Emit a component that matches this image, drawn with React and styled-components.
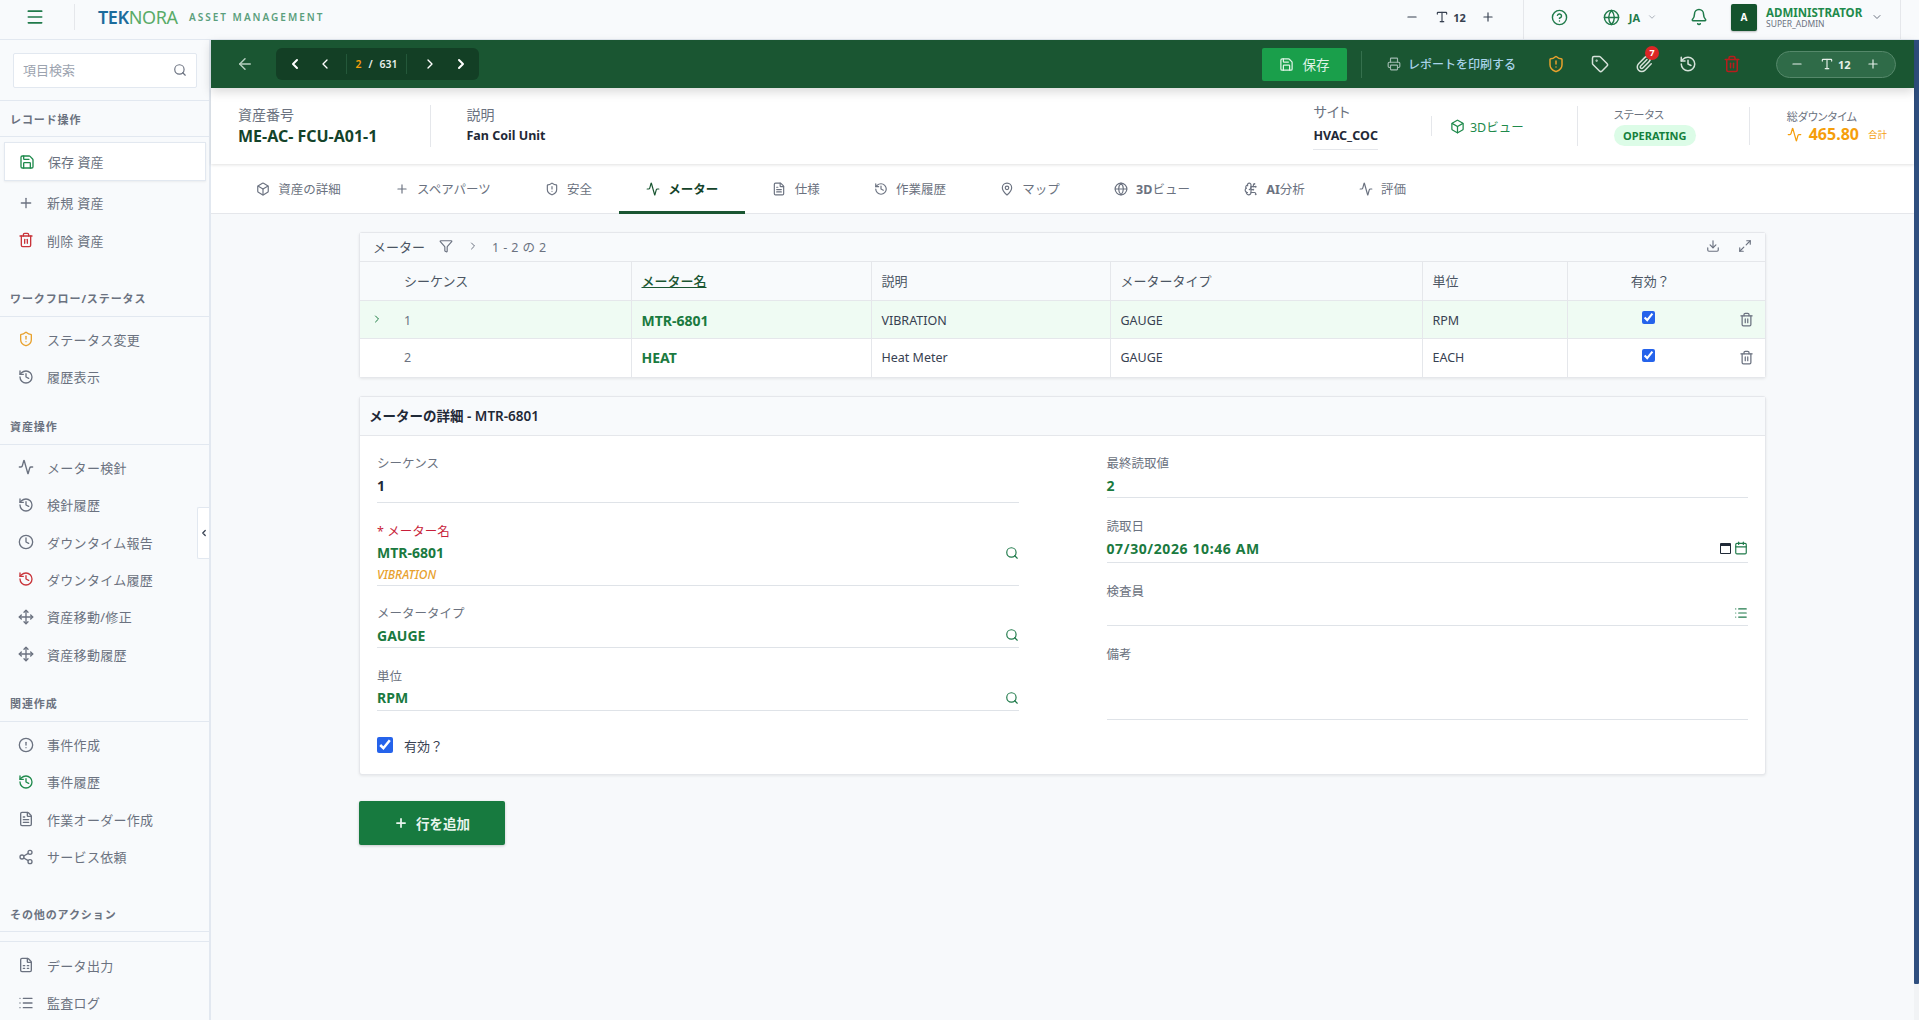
import React from 'react'
import styled, { createGlobalStyle } from 'styled-components'
import {
  Activity, ArrowLeft, Bell, Box, BrainCircuit, Calendar, ChevronDown, ChevronLeft, ChevronRight,
  CircleAlert, CircleHelp, Clock, Download, FileSpreadsheet, FileText, Filter, Globe,
  History, List, MapPin, Maximize2, Menu, Minus, Move, Paperclip, Plus, Printer, Save, Search,
  Share2, ShieldAlert, Tag, Trash2, Type,
} from 'lucide-react'

const GlobalStyle = createGlobalStyle`
  html, body { margin: 0; height: 100%; overflow: hidden; }
  body {
    font-family: "Noto Sans", "Noto Sans CJK JP", sans-serif;
    font-size: 13px;
    color: #374151;
    background: #f8fafc;
  }
  * { box-sizing: border-box; }
`

const Page = styled.div`
  width: 1919px;
  height: 1020px;
  display: flex;
  flex-direction: column;
  overflow: hidden;
`

/* top bar */
const TopBar = styled.header`
  height: 40px;
  flex: none;
  display: flex;
  align-items: center;
  background: #f8fafc;
  border-bottom: 1px solid #e2e8f0;
  padding: 0 18px 5px 0;
`
const MenuSlot = styled.div`
  width: 75px;
  height: 26px;
  display: flex;
  align-items: center;
  justify-content: center;
  padding-right: 5px;
  border-right: 1px solid #e5e7eb;
  color: #1f7a4a;
`
const Logo = styled.div`
  margin-left: 23px;
  width: 82px;
  font-size: 18px;
  line-height: 20px;
  letter-spacing: -0.4px;
  font-weight: 400;
  color: #59ab68;
  white-space: nowrap;
  span { color: #1c6c9c; font-weight: 600; }
`
const LogoTag = styled.div`
  margin-left: 9px;
  font-size: 10px;
  font-weight: 600;
  letter-spacing: 2px;
  color: #5b9f7c;
  white-space: nowrap;
`
const Spacer = styled.div`
  flex: 1;
`
const FontControl = styled.div`
  display: flex;
  align-items: center;
  color: ${p => p.$light ? '#e6efe9' : '#374151'};
  ${p => p.$light && `
    width: 120px;
    height: 27px;
    padding-left: 13px;
    background: #2f6b48;
    border: 1px solid #55886a;
    border-radius: 14px;
  `}
  b { font-size: 11px; font-weight: 700; margin: 0 15px 0 4px; }
  svg:first-child { margin-right: 16px; }
`
const TopDivider = styled.div`
  width: 1px;
  height: 39px;
  align-self: flex-start;
  background: #e5e7eb;
  margin-left: ${p => p.$ml}px;
`
const HelpButton = styled.div`
  margin-left: 27px;
  display: flex;
  color: #1f7a4a;
`
const LangButton = styled.div`
  margin-left: 35px;
  display: flex;
  align-items: center;
  color: #1f7a4a;
  b { font-size: 11px; font-weight: 700; margin: 0 7px 0 9px; }
  svg:last-child { color: #9ca3af; }
`
const BellButton = styled.div`
  margin-left: 33px;
  display: flex;
  color: #1f7a4a;
`
const UserChip = styled.div`
  margin-left: 23px;
  display: flex;
  align-items: center;
  > svg { margin-left: 11px; color: #6b7280; }
`
const Avatar = styled.div`
  width: 26px;
  height: 27px;
  border-radius: 2px;
  background: #14532d;
  color: #fff;
  font-size: 10px;
  font-weight: 700;
  display: flex;
  align-items: center;
  justify-content: center;
  box-shadow: 0 1px 2px rgba(0, 0, 0, .25);
`
const UserText = styled.div`
  margin-left: 9px;
  width: 94px;
  display: flex;
  flex-direction: column;
  white-space: nowrap;
  b { font-size: 11.5px; line-height: 12px; font-weight: 700; color: #1f8a4c; }
  span { font-size: 8.5px; line-height: 9px; color: #6b7280; }
`

/* body */
const Body = styled.div`
  flex: 1;
  display: flex;
  min-height: 0;
`

/* sidebar */
const Sidebar = styled.aside`
  position: relative;
  width: 211px;
  flex: none;
  background: #f8fafc;
  border-right: 2px solid #e2e8f0;
`
const SearchBlock = styled.div`
  height: 61px;
  padding: 13px 12px 0 13px;
  border-bottom: 1px solid #e2e8f0;
`
const SearchBox = styled.div`
  height: 35px;
  display: flex;
  align-items: center;
  justify-content: space-between;
  padding: 0 9px 2px 9px;
  background: #fff;
  border: 1px solid #e2e8f0;
  border-radius: 2px;
  color: #9ca3af;
  font-size: 13px;
  svg { color: #6b7280; }
`
const SectionLabel = styled.div`
  height: 36px;
  margin-top: ${p => p.$mt || 0}px;
  padding: 0 10px;
  display: flex;
  align-items: center;
  border-bottom: 1px solid #e2e8f0;
  font-size: 11px;
  font-weight: 700;
  letter-spacing: 0.9px;
  color: #6b7280;
  white-space: nowrap;
`
const EmptyGroup = styled.div`
  height: 10px;
  border-bottom: 1px solid #e2e8f0;
`
const Items = styled.div`
  padding-top: 4px;
`
const Item = styled.div`
  height: ${p => p.$active ? 39 : 37.4}px;
  display: flex;
  align-items: center;
  gap: 13px;
  margin: ${p => p.$active ? '1px 3px 3px 4px' : '0'};
  padding-left: ${p => p.$active ? 14 : 18}px;
  color: #6b7280;
  font-size: 13px;
  letter-spacing: 0.3px;
  white-space: nowrap;
  ${p => p.$active && `
    background: #fff;
    border: 1px solid #e2e8f0;
    box-shadow: 0 1px 2px rgba(0, 0, 0, .06);
    letter-spacing: 0;
  `}
  svg { color: ${p => p.$icon || '#6b7280'}; flex: none; }
`
const CollapseHandle = styled.div`
  position: absolute;
  top: 467px;
  right: 0;
  width: 12px;
  height: 52px;
  background: #fff;
  border: 1px solid #e2e8f0;
  border-right: 0;
  border-radius: 2px 0 0 2px;
  display: flex;
  align-items: center;
  justify-content: center;
  color: #374151;
`

/* main */
const Main = styled.main`
  flex: 1;
  min-width: 0;
  display: flex;
  flex-direction: column;
  background: #f7f9fb;
`
const ActionBar = styled.div`
  position: relative;
  z-index: 2;
  height: 48px;
  flex: none;
  display: flex;
  align-items: center;
  padding: 0 18px 0 25px;
  background: #1a5632;
  box-shadow: 0 4px 10px rgba(0, 0, 0, .15);
`
const BackButton = styled.div`
  display: flex;
  color: #b7cfc0;
`
const NavGroup = styled.div`
  margin-left: 22px;
  width: 203px;
  height: 32px;
  display: flex;
  align-items: center;
  background: #133f25;
  border-radius: 6px;
  color: #fff;
`
const NavStep = styled.div`
  width: ${p => p.$w}px;
  display: flex;
  justify-content: center;
`
const NavCount = styled.div`
  height: 20px;
  width: 61px;
  margin-left: 9px;
  display: flex;
  align-items: center;
  justify-content: center;
  gap: 7px;
  border-left: 1px solid #24583a;
  border-right: 1px solid #24583a;
  font-size: 10.5px;
  font-weight: 600;
  color: #e8f0eb;
  em { font-style: normal; color: #f59e0b; }
`
const SaveButton = styled.div`
  width: 85px;
  height: 33px;
  display: flex;
  align-items: center;
  justify-content: center;
  gap: 8px;
  background: #1a9f4b;
  border-radius: 2px;
  color: #dff3e6;
  font-size: 13.5px;
`
const BarDivider = styled.div`
  width: 1px;
  height: 27px;
  margin: 0 25px 0 14px;
  background: #35704d;
`
const PrintLink = styled.div`
  display: flex;
  align-items: center;
  gap: 7px;
  margin-right: 31px;
  color: #a8d3ea;
  font-size: 12px;
  font-weight: 500;
  white-space: nowrap;
  svg { color: #9fb9b0; }
`
const BarIcons = styled.div`
  display: flex;
  align-items: center;
  gap: 26px;
  margin-right: 35px;
`
const BarIcon = styled.div`
  position: relative;
  display: flex;
  color: ${p => p.$color};
`
const Badge = styled.span`
  position: absolute;
  top: -9px;
  right: -6px;
  width: 14px;
  height: 14px;
  border-radius: 50%;
  background: #dc2626;
  color: #fff;
  font-size: 9px;
  font-weight: 700;
  line-height: 14px;
  text-align: center;
`
const ScrollArea = styled.div`
  flex: 1;
  min-height: 0;
  display: flex;
  flex-direction: column;
`

/* asset header */
const InfoBar = styled.div`
  height: 76px;
  flex: none;
  display: flex;
  align-items: center;
  padding: 0 27px;
  background: #fff;
  box-shadow: 0 1px 3px rgba(0, 0, 0, .12);
  position: relative;
  z-index: 1;
`
const InfoBlock = styled.div`
  display: flex;
  flex-direction: column;
`
const InfoLabel = styled.div`
  font-size: ${p => p.$small ? 11 : 14}px;
  line-height: 18px;
  color: #6b7280;
  white-space: nowrap;
  font-feature-settings: "palt";
`
const InfoValue = styled.div`
  margin-top: 2px;
  font-size: ${p => p.$big ? 16 : 12.5}px;
  line-height: 20px;
  font-weight: 700;
  color: ${p => p.$big ? '#14432a' : '#1f2937'};
  white-space: nowrap;
`
const SiteValue = styled(InfoValue)`
  padding-bottom: 3px;
  border-bottom: 1px solid #e5e7eb;
  margin-top: 5px;
`
const InfoDivider = styled.div`
  width: 1px;
  height: ${p => p.$h}px;
  margin: 0 ${p => p.$r}px 0 ${p => p.$l}px;
  background: #e5e7eb;
`
const ViewLink = styled.div`
  display: flex;
  align-items: center;
  gap: 5px;
  color: #1f8a4c;
  font-size: 12.5px;
  white-space: nowrap;
`
const StatusPill = styled.div`
  margin-top: 1px;
  height: 21px;
  width: 82px;
  border-radius: 11px;
  background: #dcfce7;
  color: #15803d;
  font-size: 11px;
  font-weight: 700;
  display: flex;
  align-items: center;
  justify-content: center;
`
const DownRow = styled.div`
  display: flex;
  align-items: center;
  gap: 7px;
  margin-top: -2px;
  color: #f59e0b;
  b { font-size: 16px; line-height: 20px; font-weight: 700; }
  small { font-size: 9.5px; margin-left: 2px; }
`

/* tabs */
const TabBar = styled.nav`
  height: 50px;
  flex: none;
  display: flex;
  padding-left: 18px;
  background: #fff;
  border-bottom: 1px solid #e5e7eb;
`
const Tab = styled.div`
  height: 50px;
  display: flex;
  align-items: center;
  gap: 8.3px;
  padding: 2px 27px 0;
  font-size: 12.5px;
  font-weight: ${p => p.$active ? 600 : 400};
  color: ${p => p.$active ? '#14432a' : '#6b7280'};
  border-bottom: 3px solid ${p => p.$active ? '#1a5632' : 'transparent'};
  white-space: nowrap;
  svg { color: ${p => p.$active ? '#1a5632' : '#6b7280'}; }
  b { font-weight: 700; }
`

/* content */
const Content = styled.div`
  flex: 1;
  padding: 18px 148px 0;
`
const Card = styled.section`
  background: #fff;
  border: 1px solid #e5e7eb;
  border-radius: 3px;
  box-shadow: 0 1px 3px rgba(0, 0, 0, .08);
`
const TableTitle = styled.div`
  height: 29px;
  display: flex;
  align-items: center;
  padding: 0 13px 2px;
  background: #f8fafc;
  border-bottom: 1px solid #e5e7eb;
  font-size: 13px;
  color: #4b5563;
  svg { color: #6b7280; }
`
const TitleIcon = styled.span`
  display: flex;
  margin-left: ${p => p.$ml}px;
`
const TitleCount = styled.span`
  color: #6b7280;
  font-size: 12.5px;
  letter-spacing: 0.4px;
  margin-left: 13px;
`
const TitleIcons = styled.div`
  margin-left: auto;
  display: flex;
  gap: 18px;
`
const Grid = styled.table`
  width: 100%;
  border-collapse: collapse;
  table-layout: fixed;
`
const Th = styled.th`
  height: 38px;
  padding: ${p => p.$center ? '0 32px 0 0' : '0 10px'};
  text-align: ${p => p.$center ? 'center' : 'left'};
  font-size: 13px;
  font-weight: 400;
  color: #4b5563;
  background: #f8fafc;
  border-bottom: 1px solid #e5e7eb;
  & + & { border-left: 1px solid #e5e7eb; }
  &:first-child { padding-left: 44px; }
`
const SortHead = styled.span`
  color: #1a5632;
  font-weight: 500;
  text-decoration: underline;
`
const Tr = styled.tr`
  background: ${p => p.$active ? '#effbf3' : '#fff'};
`
const Td = styled.td`
  position: relative;
  height: 38px;
  padding: 2px 10px 0;
  font-size: 12.5px;
  color: #374151;
  border-bottom: 1px solid #e5e7eb;
  & + & { border-left: 1px solid #e5e7eb; }
  &:first-child { padding-left: 44px; color: #6b7280; }
  tr:last-child & { border-bottom: 0; height: 39px; padding-top: 0; }
`
const NameLink = styled.span`
  font-size: 14px;
  font-weight: 700;
  color: #1a7a40;
`
const RowToggle = styled.span`
  position: absolute;
  left: 11px;
  top: 12px;
  display: flex;
  color: #1a7a40;
`
const CheckCell = styled.div`
  display: flex;
  align-items: center;
  height: 100%;
  padding: 0 0 5px 64px;
`
const RowCheck = styled.input`
  width: 13px;
  height: 13px;
  margin: 0;
  accent-color: #2563eb;
`
const RowDelete = styled.span`
  position: absolute;
  right: 11px;
  top: 11px;
  display: flex;
  color: #6b7280;
`
const DetailCard = styled(Card)`
  margin-top: 18px;
  height: 379px;
`
const DetailHead = styled.div`
  height: 39px;
  display: flex;
  align-items: center;
  padding: 0 10px 2px 9px;
  background: #f8fafc;
  border-bottom: 1px solid #e5e7eb;
  font-size: 13.5px;
  font-weight: 600;
  color: #1f2937;
`
const DetailBody = styled.div`
  display: grid;
  grid-template-columns: 1fr 1fr;
  column-gap: 88px;
  padding: 20px 17px 0;
`
const Column = styled.div`
  display: flex;
  flex-direction: column;
  gap: ${p => p.$gap}px;
`
const Field = styled.div`
  height: ${p => p.$h}px;
  border-bottom: 1px solid #dfe3e8;
`
const Label = styled.div`
  font-size: 12.5px;
  line-height: 16px;
  color: ${p => p.$required ? '#c81e3a' : '#6b7280'};
`
const ValueRow = styled.div`
  height: 20px;
  margin-top: 3px;
  display: flex;
  align-items: center;
  justify-content: space-between;
  font-size: 14px;
  font-weight: 700;
  letter-spacing: ${p => p.$wide ? 0.6 : 0}px;
  color: ${p => p.$plain ? '#1f2937' : '#1a7a40'};
  svg { color: #1f7a4a; }
`
const DateIcons = styled.div`
  display: flex;
  align-items: center;
  gap: 3px;
`
const NativeCal = styled.span`
  width: 11px;
  height: 11px;
  border: 1.5px solid #1f2937;
  border-top-width: 3px;
  border-radius: 1px;
`
const SubValue = styled.div`
  font-size: 12px;
  line-height: 14px;
  margin-top: 5px;
  font-style: italic;
  font-weight: 500;
  color: #e8a12d;
`
const ActiveRow = styled.label`
  display: flex;
  align-items: center;
  gap: 11px;
  margin-top: 5px;
  height: 18px;
  font-size: 13px;
  color: #374151;
`
const BigCheck = styled.input`
  width: 16px;
  height: 16px;
  margin: 0;
  accent-color: #2563eb;
`
const AddButton = styled.div`
  margin-top: 26px;
  width: 146px;
  height: 44px;
  display: flex;
  align-items: center;
  justify-content: center;
  gap: 8px;
  padding-bottom: 1px;
  background: #177a3f;
  border-radius: 2px;
  color: #e9f5ee;
  font-size: 13.5px;
  font-weight: 600;
  box-shadow: 0 1px 3px rgba(0, 0, 0, .2);
`
const ScrollTrack = styled.div`
  width: 5px;
  flex: none;
  background: #f1f3f5;
`
const ScrollThumb = styled.div`
  height: 944px;
  background: #2f4f7f;
  border-radius: 0 0 1px 1px;
`

const sidebar = [
  { label: 'レコード操作', items: [
    { text: '保存 資産', Icon: Save, color: '#1f8a4c', active: true },
    { text: '新規 資産', Icon: Plus },
    { text: '削除 資産', Icon: Trash2, color: '#c9343a' },
  ] },
  { label: 'ワークフロー/ステータス', mt: 22, items: [
    { text: 'ステータス変更', Icon: ShieldAlert, color: '#e8a12d' },
    { text: '履歴表示', Icon: History },
  ] },
  { label: '資産操作', mt: 13, items: [
    { text: 'メーター検針', Icon: Activity },
    { text: '検針履歴', Icon: History },
    { text: 'ダウンタイム報告', Icon: Clock },
    { text: 'ダウンタイム履歴', Icon: History, color: '#c9343a' },
    { text: '資産移動/修正', Icon: Move },
    { text: '資産移動履歴', Icon: Move },
  ] },
  { label: '関連作成', mt: 13, items: [
    { text: '事件作成', Icon: CircleAlert },
    { text: '事件履歴', Icon: History, color: '#1f8a4c' },
    { text: '作業オーダー作成', Icon: FileText },
    { text: 'サービス依頼', Icon: Share2 },
  ] },
  { label: 'その他のアクション', mt: 21, extra: true, items: [
    { text: 'データ出力', Icon: FileSpreadsheet },
    { text: '監査ログ', Icon: List },
  ] },
]

const tabs = [
  { text: '資産の詳細', Icon: Box },
  { text: 'スペアパーツ', Icon: Plus },
  { text: '安全', Icon: ShieldAlert },
  { text: 'メーター', Icon: Activity, active: true },
  { text: '仕様', Icon: FileText },
  { text: '作業履歴', Icon: History },
  { text: 'マップ', Icon: MapPin },
  { text: 'ビュー', strong: '3D', Icon: Globe },
  { text: '分析', strong: 'AI', Icon: BrainCircuit },
  { text: '評価', Icon: Activity },
]

const rows = [
  { seq: 1, name: 'MTR-6801', desc: 'VIBRATION', type: 'GAUGE', unit: 'RPM', active: true },
  { seq: 2, name: 'HEAT', desc: 'Heat Meter', type: 'GAUGE', unit: 'EACH' },
]

const App = () => (
  <Page>
    <GlobalStyle />
    <TopBar>
      <MenuSlot><Menu size={20} /></MenuSlot>
      <Logo><span>TEK</span>NORA</Logo>
      <LogoTag>ASSET MANAGEMENT</LogoTag>
      <Spacer />
      <FontControl>
        <Minus size={14} />
        <Type size={14} />
        <b>12</b>
        <Plus size={14} />
      </FontControl>
      <TopDivider $ml={28} />
      <HelpButton><CircleHelp size={17} /></HelpButton>
      <LangButton>
        <Globe size={17} />
        <b>JA</b>
        <ChevronDown size={10} />
      </LangButton>
      <BellButton><Bell size={18} /></BellButton>
      <UserChip>
        <Avatar>A</Avatar>
        <UserText>
          <b>ADMINISTRATOR</b>
          <span>SUPER_ADMIN</span>
        </UserText>
        <ChevronDown size={12} />
      </UserChip>
      <TopDivider $ml={17} />
    </TopBar>
    <Body>
      <Sidebar>
        <SearchBlock>
          <SearchBox>項目検索<Search size={14} /></SearchBox>
        </SearchBlock>
        {sidebar.map(section => (
          <div key={section.label}>
            <SectionLabel $mt={section.mt}>{section.label}</SectionLabel>
            {section.extra && <EmptyGroup />}
            <Items>
              {section.items.map(({ text, Icon, color, active }) => (
                <Item key={text} $active={active} $icon={color}>
                  <Icon size={16} />
                  {text}
                </Item>
              ))}
            </Items>
          </div>
        ))}
        <CollapseHandle><ChevronLeft size={10} strokeWidth={3} /></CollapseHandle>
      </Sidebar>
      <Main>
        <ActionBar>
          <BackButton><ArrowLeft size={18} /></BackButton>
          <NavGroup>
            <NavStep $w={37}><ChevronLeft size={16} strokeWidth={3} /></NavStep>
            <NavStep $w={24}><ChevronLeft size={16} /></NavStep>
            <NavCount><em>2</em>/<span>631</span></NavCount>
            <NavStep $w={46}><ChevronRight size={16} /></NavStep>
            <NavStep $w={16}><ChevronRight size={16} strokeWidth={3} /></NavStep>
          </NavGroup>
          <Spacer />
          <SaveButton><Save size={15} />保存</SaveButton>
          <BarDivider />
          <PrintLink><Printer size={14} />レポートを印刷する</PrintLink>
          <BarIcons>
            <BarIcon $color="#e8a12d"><ShieldAlert size={18} /></BarIcon>
            <BarIcon $color="#d6e2da"><Tag size={18} /></BarIcon>
            <BarIcon $color="#d6e2da"><Paperclip size={18} /><Badge>7</Badge></BarIcon>
            <BarIcon $color="#d6e2da"><History size={18} /></BarIcon>
            <BarIcon $color="#b91c1c"><Trash2 size={18} /></BarIcon>
          </BarIcons>
          <FontControl $light>
            <Minus size={14} />
            <Type size={14} />
            <b>12</b>
            <Plus size={14} />
          </FontControl>
        </ActionBar>
        <ScrollArea>
          <InfoBar>
            <InfoBlock>
              <InfoLabel>資産番号</InfoLabel>
              <InfoValue $big>ME-AC- FCU-A01-1</InfoValue>
            </InfoBlock>
            <InfoDivider $h={42} $l={53} $r={35} />
            <InfoBlock>
              <InfoLabel>説明</InfoLabel>
              <InfoValue>Fan Coil Unit</InfoValue>
            </InfoBlock>
            <Spacer />
            <InfoBlock>
              <InfoLabel>サイト</InfoLabel>
              <SiteValue>HVAC_COC</SiteValue>
            </InfoBlock>
            <InfoDivider $h={20} $l={53} $r={18} />
            <ViewLink><Box size={15} />3Dビュー</ViewLink>
            <InfoDivider $h={40} $l={53} $r={36} />
            <InfoBlock>
              <InfoLabel $small>ステータス</InfoLabel>
              <StatusPill>OPERATING</StatusPill>
            </InfoBlock>
            <InfoDivider $h={38} $l={53} $r={37} />
            <InfoBlock>
              <InfoLabel $small>総ダウンタイム</InfoLabel>
              <DownRow>
                <Activity size={15} />
                <b>465.80</b>
                <small>合計</small>
              </DownRow>
            </InfoBlock>
          </InfoBar>
          <TabBar>
            {tabs.map(({ text, strong, Icon, active }) => (
              <Tab key={text} $active={active}>
                <Icon size={14} />
                <span>{strong && <b>{strong}</b>}{text}</span>
              </Tab>
            ))}
          </TabBar>
          <Content>
            <Card>
              <TableTitle>
                メーター
                <TitleIcon $ml={14}><Filter size={14} /></TitleIcon>
                <TitleIcon $ml={14}><ChevronRight size={12} /></TitleIcon>
                <TitleCount>1 - 2 の 2</TitleCount>
                <TitleIcons>
                  <Download size={14} />
                  <Maximize2 size={14} />
                </TitleIcons>
              </TableTitle>
              <Grid>
                <colgroup>
                  <col width="271" />
                  <col width="240" />
                  <col width="239" />
                  <col width="312" />
                  <col width="145" />
                  <col />
                </colgroup>
                <thead>
                  <tr>
                    <Th>シーケンス</Th>
                    <Th><SortHead>メーター名</SortHead></Th>
                    <Th>説明</Th>
                    <Th>メータータイプ</Th>
                    <Th>単位</Th>
                    <Th $center>有効？</Th>
                  </tr>
                </thead>
                <tbody>
                  {rows.map(row => (
                    <Tr key={row.seq} $active={row.active}>
                      <Td>
                        {row.active && <RowToggle><ChevronRight size={12} /></RowToggle>}
                        {row.seq}
                      </Td>
                      <Td><NameLink>{row.name}</NameLink></Td>
                      <Td>{row.desc}</Td>
                      <Td>{row.type}</Td>
                      <Td>{row.unit}</Td>
                      <Td>
                        <CheckCell><RowCheck type="checkbox" defaultChecked /></CheckCell>
                        <RowDelete><Trash2 size={15} /></RowDelete>
                      </Td>
                    </Tr>
                  ))}
                </tbody>
              </Grid>
            </Card>
            <DetailCard>
              <DetailHead>メーターの詳細 - MTR-6801</DetailHead>
              <DetailBody>
                <Column $gap={20.5}>
                  <Field $h={47}>
                    <Label>シーケンス</Label>
                    <ValueRow $plain>1</ValueRow>
                  </Field>
                  <Field $h={62}>
                    <Label $required>* メーター名</Label>
                    <ValueRow>MTR-6801<Search size={14} /></ValueRow>
                    <SubValue>VIBRATION</SubValue>
                  </Field>
                  <Field $h={42}>
                    <Label>メータータイプ</Label>
                    <ValueRow>GAUGE<Search size={14} /></ValueRow>
                  </Field>
                  <Field $h={42}>
                    <Label>単位</Label>
                    <ValueRow>RPM<Search size={14} /></ValueRow>
                  </Field>
                  <ActiveRow>
                    <BigCheck type="checkbox" defaultChecked />
                    有効？
                  </ActiveRow>
                </Column>
                <Column $gap={21}>
                  <Field $h={42}>
                    <Label>最終読取値</Label>
                    <ValueRow>2</ValueRow>
                  </Field>
                  <Field $h={44}>
                    <Label>読取日</Label>
                    <ValueRow $wide>
                      07/30/2026 10:46 AM
                      <DateIcons><NativeCal /><Calendar size={14} /></DateIcons>
                    </ValueRow>
                  </Field>
                  <Field $h={42}>
                    <Label>検査員</Label>
                    <ValueRow><span /><List size={14} /></ValueRow>
                  </Field>
                  <Field $h={73}>
                    <Label>備考</Label>
                  </Field>
                </Column>
              </DetailBody>
            </DetailCard>
            <AddButton><Plus size={14} strokeWidth={3} />行を追加</AddButton>
          </Content>
        </ScrollArea>
      </Main>
      <ScrollTrack><ScrollThumb /></ScrollTrack>
    </Body>
  </Page>
)

export default App
